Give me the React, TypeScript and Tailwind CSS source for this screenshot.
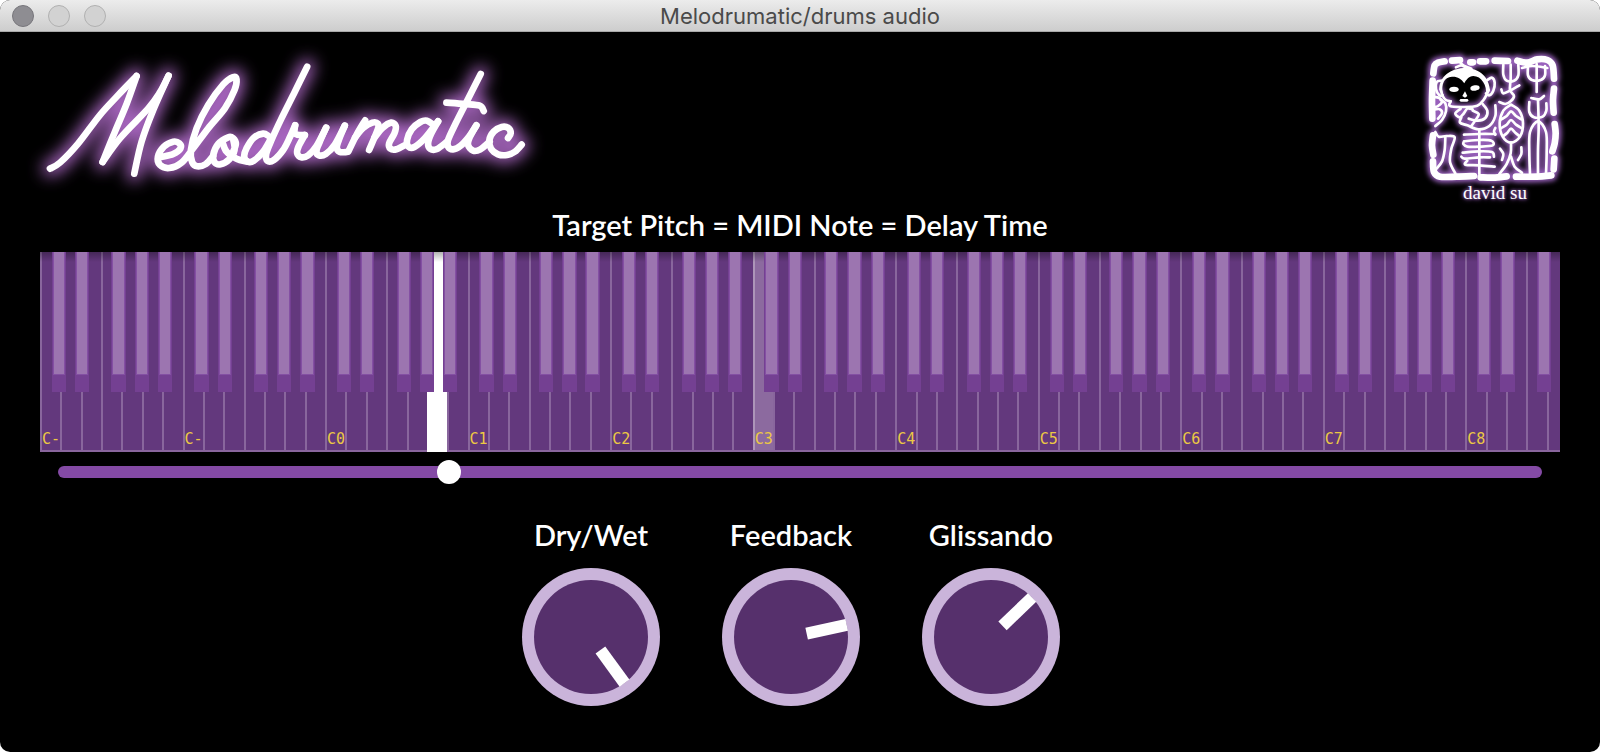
import { useState } from "react";

type Pt = [number, number];

/** Smooth curve that passes through every point (Catmull-Rom as cubic beziers). */
function curve(pts: Pt[]): string {
  let d = `M${pts[0][0]},${pts[0][1]}`;
  for (let i = 0; i < pts.length - 1; i++) {
    const a = pts[i - 1] ?? pts[i];
    const b = pts[i];
    const c = pts[i + 1];
    const e = pts[i + 2] ?? c;
    d += `C${b[0] + (c[0] - a[0]) / 6},${b[1] + (c[1] - a[1]) / 6} ${c[0] - (e[0] - b[0]) / 6},${c[1] - (e[1] - b[1]) / 6} ${c[0]},${c[1]}`;
  }
  return d;
}

const LOGO_STROKES: Pt[][] = [
  // M
  [[150, 506], [180, 488], [235, 430], [300, 345], [355, 285], [410, 228]],
  [[410, 228], [380, 312], [345, 395], [308, 486]],
  [[308, 486], [360, 415], [445, 325], [480, 277], [506, 227]],
  [[506, 227], [460, 330], [425, 425], [403, 521]],
  // e l
  [[484, 471], [520, 462], [542, 445], [538, 430], [520, 425], [492, 440], [474, 470], [480, 495], [508, 504], [545, 488], [580, 445], [625, 385], [675, 325], [704, 270], [710, 238], [700, 231], [670, 253], [625, 315], [590, 385], [573, 450], [577, 487], [592, 499], [618, 492], [640, 468]],
  // o
  [[700, 455], [708, 432], [700, 415], [685, 412], [655, 432], [640, 465], [644, 487], [662, 493], [688, 478], [704, 450], [700, 418]],
  [[668, 427], [680, 455], [710, 476], [742, 485]],
  // d
  [[806, 408], [790, 401], [762, 413], [740, 445], [733, 470], [744, 485], [762, 482], [790, 455], [812, 418]],
  [[922, 200], [885, 275], [845, 355], [815, 420], [799, 462], [803, 483], [822, 480], [850, 450], [870, 412], [886, 376]],
  // r
  [[886, 376], [884, 398], [892, 404], [915, 405]],
  [[915, 405], [896, 440], [892, 460], [904, 472], [925, 466], [950, 438], [979, 383]],
  // u
  [[979, 383], [960, 425], [950, 452], [957, 466], [978, 462], [1005, 434], [1035, 377]],
  [[1035, 377], [1019, 415], [1011, 442], [1020, 456], [1042, 456]],
  // m
  [[1046, 454], [1070, 405], [1096, 361]],
  [[1066, 412], [1090, 384], [1118, 368], [1134, 371], [1134, 388], [1108, 450]],
  [[1124, 413], [1148, 384], [1174, 368], [1188, 378], [1184, 400], [1168, 430], [1172, 446], [1190, 448], [1218, 434]],
  // a
  [[1300, 374], [1282, 362], [1262, 366], [1236, 388], [1222, 420], [1226, 440], [1244, 441], [1275, 415], [1315, 364]],
  [[1315, 364], [1294, 402], [1285, 430], [1292, 447], [1312, 447], [1342, 425]],
  // t
  [[1443, 222], [1405, 297], [1368, 370], [1345, 420], [1345, 440], [1360, 448], [1382, 438], [1408, 410], [1430, 376]],
  [[1340, 308], [1395, 312], [1440, 317], [1452, 333]],
  // i c
  [[1430, 376], [1410, 412], [1405, 435], [1420, 452], [1442, 448], [1470, 425]],
  [[1525, 414], [1533, 400], [1526, 384], [1506, 381], [1482, 395], [1469, 420], [1474, 446], [1495, 463], [1522, 465], [1546, 455], [1566, 434]],
];

const SEAL_FRAME: Pt[][] = [
  [[70, 100], [74, 76], [84, 68], [104, 64]],
  [[126, 62], [150, 60]],
  [[181, 67], [189, 67]],
  [[210, 64], [228, 64]],
  [[254, 62], [294, 63]],
  [[322, 62], [352, 68], [382, 58], [412, 60], [428, 76], [432, 116]],
  [[432, 146], [429, 180], [431, 218]],
  [[434, 252], [437, 280], [434, 310], [427, 334]],
  [[433, 356], [431, 388]],
  [[424, 406], [380, 410], [318, 410]],
  [[290, 409], [250, 413], [212, 412]],
  [[192, 408], [140, 410], [90, 410], [72, 396], [69, 364]],
  [[70, 344], [66, 316], [69, 286]],
  [[67, 236], [66, 180], [68, 122]],
];

const SEAL_STROKES: Pt[][] = [
  // monkey: jaw, ears, tuft
  [[92, 148], [98, 168], [108, 180], [122, 184]],
  [[122, 184], [120, 198], [160, 201], [202, 197], [222, 178], [236, 150]],
  [[232, 120], [246, 113], [254, 128], [250, 152], [238, 166], [228, 160]],
  [[94, 122], [80, 126], [78, 148], [88, 166], [98, 166]],
  [[138, 82], [154, 76], [170, 84]],
  [[150, 66], [160, 76], [184, 86]],
  // arms and body
  [[152, 206], [136, 220], [148, 232], [160, 222], [172, 206], [188, 208]],
  [[154, 232], [150, 248], [172, 256], [205, 268], [238, 258], [256, 228], [256, 196]],
  [[218, 192], [232, 212], [226, 234], [204, 242], [176, 236]],
  [[188, 212], [206, 222], [198, 238], [184, 258]],
  // tail
  [[68, 170], [88, 174], [96, 186], [84, 198], [72, 202]],
  [[92, 180], [106, 190], [108, 214], [96, 240], [76, 258]],
  [[76, 208], [90, 208], [96, 220], [84, 236]],
  // left radical
  [[76, 276], [86, 290], [110, 288], [134, 292], [124, 326], [120, 366], [136, 400]],
  [[106, 292], [104, 330], [96, 364], [78, 388]],
  // centre character
  [[208, 268], [208, 335], [208, 402]],
  [[162, 284], [208, 282], [256, 282]],
  [[256, 264], [252, 274], [256, 284]],
  [[162, 304], [208, 300], [244, 302], [248, 316], [208, 320], [172, 320], [160, 312], [162, 304]],
  [[158, 338], [208, 334], [246, 336], [252, 350]],
  [[154, 350], [164, 356], [208, 352], [240, 352]],
  [[172, 362], [166, 374], [208, 376], [254, 380]],
  // upper right, left half
  [[280, 74], [280, 104], [290, 122], [312, 122], [325, 106], [325, 74]],
  [[302, 74], [302, 116], [300, 150], [312, 168], [302, 184], [286, 192], [268, 186]],
  [[274, 148], [280, 160], [300, 152], [328, 136]],
  // upper right, right half
  [[354, 78], [354, 106], [366, 120], [392, 120], [405, 106], [405, 78]],
  [[380, 72], [380, 114], [380, 156]],
  [[336, 84], [368, 78], [412, 84]],
  // fish body
  [[303, 194], [280, 212], [269, 250], [278, 290], [303, 308], [330, 290], [339, 250], [328, 212], [303, 194]],
  [[274, 238], [290, 228], [303, 214], [318, 228], [334, 238]],
  [[274, 264], [290, 254], [303, 240], [318, 254], [334, 264]],
  [[280, 288], [292, 278], [303, 266], [316, 278], [328, 288]],
  // fire
  [[303, 308], [302, 340], [290, 372], [268, 402]],
  [[303, 350], [314, 380], [336, 398]],
  [[270, 326], [280, 342], [276, 360]],
  [[334, 322], [334, 342], [324, 360]],
  // grain
  [[402, 168], [388, 178], [364, 174]],
  [[384, 178], [386, 260], [384, 330], [384, 402]],
  [[358, 186], [358, 216], [372, 232], [398, 230], [409, 212], [409, 190]],
  [[360, 402], [358, 340], [360, 276], [384, 244], [408, 276], [410, 340], [408, 402]],
];

function Logo() {
  const paths = LOGO_STROKES.map(curve);
  return (
    <svg viewBox="60 120 1600 480" className="h-40 w-[533px] overflow-visible" role="img" aria-label="Melodrumatic" fill="none" strokeLinecap="round" strokeLinejoin="round">
      <defs>
        <filter id="logo-glow" x="-10%" y="-40%" width="120%" height="180%">
          <feGaussianBlur stdDeviation="24" />
        </filter>
      </defs>
      <g stroke="#a866c0" strokeWidth="46" filter="url(#logo-glow)">
        {paths.map((d) => <path key={d} d={d} />)}
      </g>
      <g stroke="#fff" strokeWidth="20">
        {paths.map((d) => <path key={d} d={d} />)}
      </g>
    </svg>
  );
}

function Seal() {
  return (
    <figure className="flex w-[170px] flex-col items-center">
      <svg viewBox="0 0 510 423" className="h-[141px] w-full overflow-visible" aria-hidden="true">
        <defs>
          <filter id="seal-glow" x="-10%" y="-10%" width="120%" height="120%">
            <feGaussianBlur stdDeviation="8" />
          </filter>
        </defs>
        <g stroke="#9a62bd" fill="none" strokeLinecap="round" filter="url(#seal-glow)">
          {SEAL_FRAME.map((p, i) => <path key={i} d={curve(p)} strokeWidth="34" />)}
          {SEAL_STROKES.map((p, i) => <path key={i} d={curve(p)} strokeWidth="18" />)}
        </g>
        <g stroke="#fff" fill="none" strokeLinecap="round" strokeLinejoin="round">
          {SEAL_FRAME.map((p, i) => <path key={i} d={curve(p)} strokeWidth="20" />)}
          {SEAL_STROKES.map((p, i) => <path key={i} d={curve(p)} strokeWidth="8" />)}
        </g>
        <path fill="#fff" d="M88,150C86,118 112,88 160,84C208,82 238,112 240,152L228,166C232,136 214,108 190,108C176,109 168,120 163,130C154,116 142,109 126,110C102,112 94,132 98,160Z" />
        <g fill="#fff">
          <ellipse cx="132" cy="148" rx="14" ry="8" />
          <ellipse cx="195" cy="144" rx="14" ry="8" transform="rotate(-8 195 144)" />
          <path d="M165,154l7,14l-7,5l-8,-5z" />
          <rect x="149" y="177" width="26" height="8" rx="4" />
        </g>
      </svg>
      <figcaption className="font-['Liberation_Serif',serif] text-[19px] font-normal leading-6 text-white [text-shadow:0_0_5px_#9a62bd,0_0_3px_#9a62bd]">david su</figcaption>
    </figure>
  );
}

const OCTAVE_LABELS = ["C-", "C-", "C0", "C1", "C2", "C3", "C4", "C5", "C6", "C7", "C8"];
const WHITE_SEMITONES = [0, 2, 4, 5, 7, 9, 11];
/** Left edge of each black key, in white-key widths from the octave's C. */
const BLACK_KEYS = [
  { semitone: 1, left: 0.58 },
  { semitone: 3, left: 1.72 },
  { semitone: 6, left: 3.51 },
  { semitone: 8, left: 4.65 },
  { semitone: 10, left: 5.79 },
];
const WHITE_KEYS_SHOWN = 74.65;
const MIDDLE_C = 60;

function Octave({ index, note, onPick }: { index: number; note: number; onPick: (n: number) => void }) {
  const base = index * 12;
  return (
    <div className="relative flex h-full shrink-0" style={{ width: `${(7 / WHITE_KEYS_SHOWN) * 100}%` }}>
      {WHITE_SEMITONES.map((s) => {
        const n = base + s;
        const tone =
          n === note
            ? "z-[3] border-white bg-white"
            : n === MIDDLE_C
              ? "border-[#ad95b9] bg-[#8c6a9f]"
              : "border-[#89669d] bg-[#63387d]";
        return (
          <button
            key={s}
            type="button"
            aria-label={`Note ${n}`}
            onClick={() => onPick(n)}
            className={`flex min-w-0 flex-1 items-end overflow-visible border-l-2 pb-[3px] text-left font-['DejaVu_Sans_Mono',monospace] text-[15px] font-normal leading-5 text-[#ecc843] ${tone}`}
          >
            {s === 0 && <span className="w-0 whitespace-nowrap">{OCTAVE_LABELS[index]}</span>}
          </button>
        );
      })}
      {BLACK_KEYS.filter((k) => base + k.semitone < 127).map((k) => (
        <button
          key={k.semitone}
          type="button"
          aria-label={`Note ${base + k.semitone}`}
          onClick={() => onPick(base + k.semitone)}
          className="absolute top-0 z-10 h-[70%] w-[10%] bg-[#744092] px-px pb-[17px]"
          style={{ left: `${(k.left / 7) * 100}%` }}
        >
          <span className="block h-full border-x border-b border-[#8450a3] bg-[#9c75b0]" />
        </button>
      ))}
    </div>
  );
}

function Keyboard({ note, onPick }: { note: number; onPick: (n: number) => void }) {
  return (
    <div className="relative isolate flex h-[200px] overflow-hidden">
      {OCTAVE_LABELS.map((_, i) => <Octave key={i} index={i} note={note} onPick={onPick} />)}
      <div className="pointer-events-none absolute inset-x-0 top-0 z-[4] h-2.5 bg-linear-to-b from-black/30 to-transparent" />
      <div className="pointer-events-none absolute inset-x-0 bottom-0 z-[2] h-0.5 bg-[#89669d]" />
    </div>
  );
}

function Knob({ label, initial }: { label: string; initial: number }) {
  const [value, setValue] = useState(initial);
  const angle = -144 + value * 2.88;
  return (
    <label className="flex w-[138px] flex-col items-center gap-[13px]">
      <span className="whitespace-nowrap text-[29px] leading-10">{label}</span>
      <span className="relative block">
        <svg viewBox="0 0 138 138" className="block size-[138px]" aria-hidden="true">
          <circle cx="69" cy="69" r="69" fill="#cab4da" />
          <circle cx="69" cy="69" r="57" fill="#56306c" />
          <rect x="63" y="12" width="12" height="41" fill="#fff" transform={`rotate(${angle} 69 69)`} />
        </svg>
        <input
          type="range"
          min={0}
          max={100}
          value={value}
          onChange={(e) => setValue(Number(e.target.value))}
          className="absolute inset-0 size-full cursor-pointer opacity-0"
        />
      </span>
    </label>
  );
}

export default function App() {
  const [note, setNote] = useState(33);
  return (
    <div className="flex min-h-screen flex-col overflow-hidden rounded-[10px] bg-black font-['Lato',sans-serif] font-semibold text-white">
      <div className="relative flex h-8 items-center justify-center border-b border-[#a9a9a9] bg-linear-to-b from-[#ececec] to-[#cdcdcd]">
        <div className="absolute left-3 flex gap-3.5">
          <button type="button" aria-label="Close" className="size-[22px] rounded-full border border-[#77767b] bg-[#8e8d92]" />
          <button type="button" aria-label="Minimize" className="size-[22px] rounded-full border border-[#b0b0b0] bg-[#d2d2d2]" />
          <button type="button" aria-label="Zoom" className="size-[22px] rounded-full border border-[#b0b0b0] bg-[#d2d2d2]" />
        </div>
        <h1 className="font-['Inter',sans-serif] text-[22px] font-normal leading-8 text-[#4a4a4a]">Melodrumatic/drums audio</h1>
      </div>

      <header className="flex items-start justify-between px-5 pt-2">
        <Logo />
        <Seal />
      </header>

      <main className="flex flex-col px-10">
        <h2 id="pitch-title" className="mb-[7px] text-center text-[29px] leading-10">Target Pitch = MIDI Note = Delay Time</h2>
        <Keyboard note={note} onPick={setNote} />
        <div className="mt-2 flex px-[18px]">
          <input
            type="range"
            min={0}
            max={127}
            value={note}
            onChange={(e) => setNote(Number(e.target.value))}
            aria-labelledby="pitch-title"
            className="h-6 w-full cursor-pointer appearance-none bg-transparent [&::-webkit-slider-runnable-track]:h-3 [&::-webkit-slider-runnable-track]:rounded-full [&::-webkit-slider-runnable-track]:bg-[#844aa5] [&::-webkit-slider-thumb]:-mt-1.5 [&::-webkit-slider-thumb]:size-6 [&::-webkit-slider-thumb]:appearance-none [&::-webkit-slider-thumb]:rounded-full [&::-webkit-slider-thumb]:bg-white"
          />
        </div>
        <div className="mt-[31px] flex justify-center gap-[62px] pr-[18px]">
          <Knob label="Dry/Wet" initial={100} />
          <Knob label="Feedback" initial={77} />
          <Knob label="Glissando" initial={66} />
        </div>
      </main>
    </div>
  );
}
